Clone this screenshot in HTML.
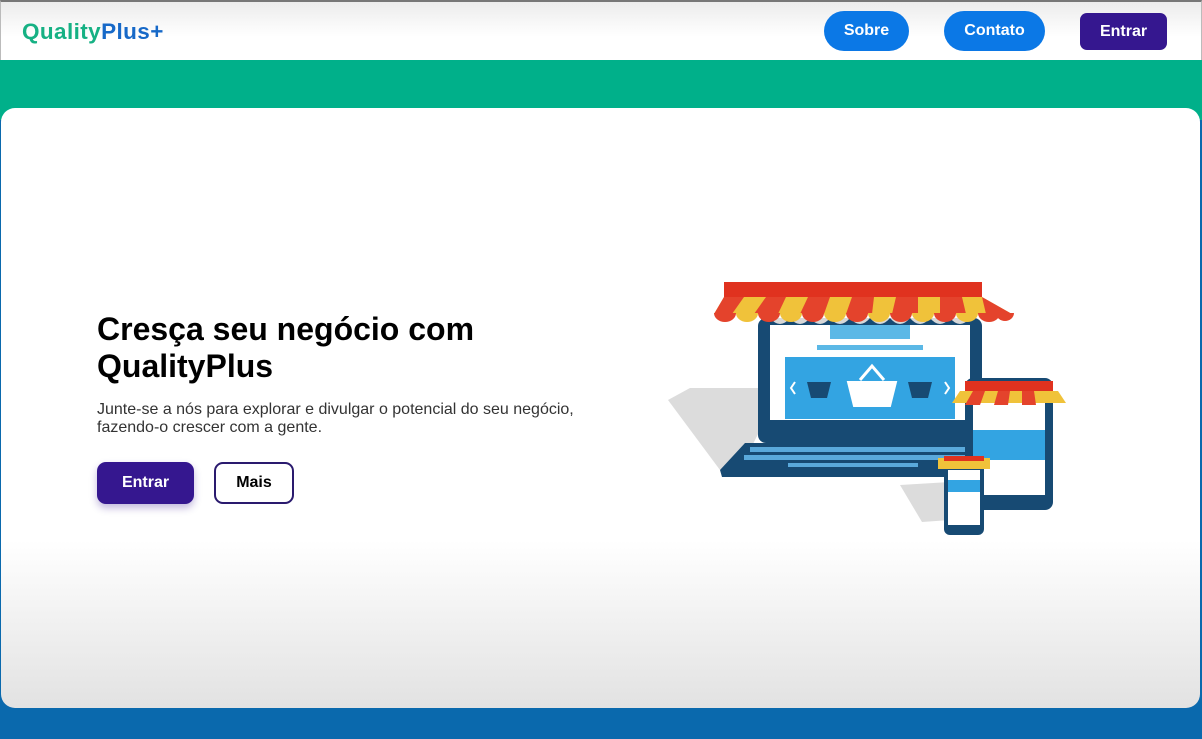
<!DOCTYPE html>
<html><head><meta charset="utf-8"><style>
*{margin:0;padding:0;box-sizing:border-box}
body{width:1202px;height:739px;overflow:hidden;background:#0a69ad;font-family:"Liberation Sans",Arial,sans-serif;position:relative}
.hdr{position:absolute;left:0;top:0;width:1202px;height:60px;background:linear-gradient(#ececec,#fff 60%);border-top:2px solid #777;border-left:1px solid #bbb;border-right:1px solid #bbb}
.logo{position:absolute;left:21px;top:17px;font-size:22.5px;font-weight:bold;letter-spacing:0.4px}
.btn{position:absolute;color:#fff;font-weight:bold;font-size:16px;display:flex;align-items:center;justify-content:center;line-height:1}
.green{position:absolute;left:0;top:60px;width:1202px;height:60px;background:#00b08a}
.card{position:absolute;left:1px;top:108px;width:1199px;height:600px;border-radius:14px;background:linear-gradient(#fff 0,#fff 72%,#e2e2e2 100%)}
h1{position:absolute;left:97px;top:311px;font-size:32px;line-height:37px;color:#000;font-weight:bold}
p{position:absolute;left:97px;top:401px;font-size:16px;line-height:18px;color:#333}
</style></head><body>
<div class="hdr">
<div class="logo"><span style="color:#16b184">Quality</span><span style="color:#1769c8">Plus+</span></div>
<div class="btn" style="left:823px;top:9px;width:85px;height:40px;border-radius:20px;background:#0b78e6">Sobre</div>
<div class="btn" style="left:943px;top:9px;width:101px;height:40px;border-radius:20px;background:#0b78e6">Contato</div>
<div class="btn" style="left:1079px;top:11px;width:87px;height:37px;border-radius:7px;background:#35178f">Entrar</div>
</div>
<div class="green"></div>
<div class="card"></div>
<h1>Cresça seu negócio com<br>QualityPlus</h1>
<p>Junte-se a nós para explorar e divulgar o potencial do seu negócio,<br>fazendo-o crescer com a gente.</p>
<div class="btn" style="left:97px;top:462px;width:97px;height:42px;border-radius:9px;background:#35178f;box-shadow:0 4px 8px rgba(53,23,143,.3)">Entrar</div>
<div class="btn" style="left:214px;top:462px;width:80px;height:42px;border-radius:9px;border:2px solid #2a1a6e;color:#000;background:#fff">Mais</div>
<svg style="position:absolute;left:660px;top:270px" width="420" height="280" viewBox="0 0 420 280">
<polygon points="8,130 30,118 100,118 100,160 80,200 60,200" fill="#dcdcdc"/>
<polygon points="240,215 290,212 290,250 262,252" fill="#dcdcdc"/>
<rect x="98" y="48" width="224" height="125" rx="8" fill="#174a73"/>
<rect x="110" y="55" width="200" height="95" fill="#fff"/>
<rect x="125" y="87" width="170" height="62" fill="#33a4e2"/>
<rect x="170" y="55" width="80" height="14" fill="#5bb8e6"/>
<rect x="157" y="75" width="106" height="5" fill="#5bb8e6"/>
<g fill="#fff" stroke="#fff" stroke-width="2"><path d="M188 112h48l-6 24h-36z"/><path d="M200 110l12-14 12 14" fill="none" stroke-width="3"/></g>
<g fill="#174a73"><path d="M147 112h24l-4 16h-16z"/><path d="M248 112h24l-4 16h-16z"/></g>
<path d="M135 112l-4 6 4 6M285 112l4 6-4 6" stroke="#fff" stroke-width="2" fill="none"/>
<polygon points="60,200 85,173 330,173 330,207 62,207" fill="#174a73"/>
<g fill="#5aa9db"><rect x="90" y="177" width="225" height="5"/><rect x="84" y="185" width="231" height="5"/><rect x="128" y="193" width="130" height="4"/></g>
<path d="M110 48 q10 12 20 0 q10 12 20 0 q10 12 20 0 q10 12 20 0 q10 12 20 0 q10 12 20 0 q10 12 20 0 q10 12 20 0 q10 12 20 0 q10 12 20 0 z" fill="#d8d8d8"/>
<rect x="64" y="12" width="258" height="15" fill="#e0321f"/>
<polygon points="64,27 322,27 352,44 54,44" fill="#f0c23a"/>
<g fill="#e4432c"><polygon points="64,27 84,27 72,44 54,44"/><polygon points="106,27 126,27 118,44 94,44"/><polygon points="148,27 170,27 164,44 140,44"/><polygon points="192,27 214,27 212,44 186,44"/><polygon points="236,27 258,27 258,44 232,44"/><polygon points="280,27 302,27 306,44 280,44"/><polygon points="322,27 352,44 326,44"/></g>
<g>
<path d="M54 43 a11 9 0 0 0 22 0z" fill="#e4432c"/><path d="M76 43 a11 9 0 0 0 22 0z" fill="#f0c23a"/><path d="M98 43 a11 9 0 0 0 22 0z" fill="#e4432c"/><path d="M120 43 a11 9 0 0 0 22 0z" fill="#f0c23a"/><path d="M142 43 a11 9 0 0 0 22 0z" fill="#e4432c"/><path d="M164 43 a11 9 0 0 0 22 0z" fill="#f0c23a"/><path d="M186 43 a11 9 0 0 0 22 0z" fill="#e4432c"/><path d="M208 43 a11 9 0 0 0 22 0z" fill="#f0c23a"/><path d="M230 43 a11 9 0 0 0 22 0z" fill="#e4432c"/><path d="M252 43 a11 9 0 0 0 22 0z" fill="#f0c23a"/><path d="M274 43 a11 9 0 0 0 22 0z" fill="#e4432c"/><path d="M296 43 a11 9 0 0 0 22 0z" fill="#f0c23a"/><path d="M318 43 a11 9 0 0 0 22 0z" fill="#e4432c"/><path d="M336 43 a9 8 0 0 0 18 0z" fill="#e4432c"/>
</g>
<rect x="305" y="108" width="88" height="132" rx="8" fill="#174a73"/>
<rect x="313" y="130" width="72" height="95" fill="#fff"/>
<rect x="313" y="160" width="72" height="30" fill="#33a4e2"/>
<rect x="305" y="111" width="88" height="10" fill="#e0321f"/>
<path d="M300 121 h98 l8 12 h-114 z" fill="#f0c23a"/>
<g fill="#e4432c"><polygon points="313,121 325,121 320,135 305,135"/><polygon points="338,121 350,121 348,135 334,135"/><polygon points="362,121 374,121 376,135 362,135"/></g>
<rect x="284" y="190" width="40" height="75" rx="6" fill="#174a73"/>
<rect x="288" y="200" width="32" height="55" fill="#fff"/>
<rect x="288" y="210" width="32" height="12" fill="#33a4e2"/>
<rect x="278" y="188" width="52" height="11" fill="#f0c23a"/>
<rect x="284" y="186" width="40" height="5" fill="#e0321f"/>
</svg>
</body></html>
